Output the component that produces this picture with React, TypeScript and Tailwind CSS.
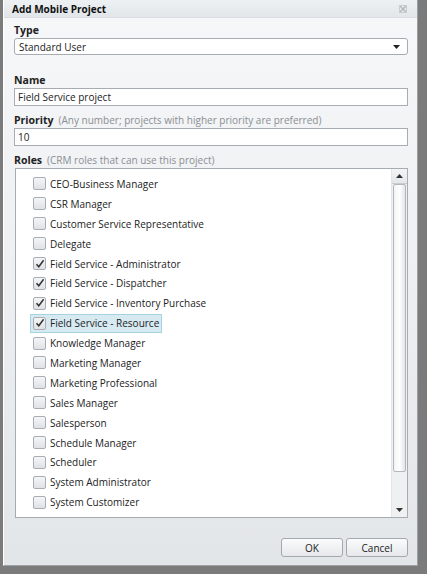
import React from "react";

const roles: [string, boolean][] = [
  ["CEO-Business Manager", false],
  ["CSR Manager", false],
  ["Customer Service Representative", false],
  ["Delegate", false],
  ["Field Service - Administrator", true],
  ["Field Service - Dispatcher", true],
  ["Field Service - Inventory Purchase", true],
  ["Field Service - Resource", true],
  ["Knowledge Manager", false],
  ["Marketing Manager", false],
  ["Marketing Professional", false],
  ["Sales Manager", false],
  ["Salesperson", false],
  ["Schedule Manager", false],
  ["Scheduler", false],
  ["System Administrator", false],
  ["System Customizer", false],
];

function Check({ on }: { on: boolean }) {
  return (
    <div className="w-[13px] h-[13px] border border-[#a9adb3] rounded-[2px] bg-gradient-to-b from-[#f4f5f6] to-[#dfe2e5] flex items-center justify-center">
      {on && (
        <svg width="10" height="10" viewBox="0 0 10 10">
          <path d="M1.5 5.2 L3.8 7.8 L8.6 1.2" fill="none" stroke="#333" strokeWidth="1.5" />
        </svg>
      )}
    </div>
  );
}

export default function App() {
  const font = { fontFamily: "'Open Sans', 'Liberation Sans', sans-serif" };
  return (
    <div className="w-[427px] h-[574px] bg-[#7b7b7b] pl-[3px] pr-[9px] pb-[8px] text-[#222]" style={font}>
      <div className="w-full h-full flex flex-col border-l border-[#fff] border-r border-b border-r-[#9aa0a6] border-b-[#9aa0a6]">
        <div className="h-[18px] flex items-center justify-between pl-[8px] pr-[10px] bg-gradient-to-b from-[#eef1f3] to-[#e2e6e9] border-b border-[#d9dde1]">
          <span className="text-[10px] font-bold text-[#111] leading-none">Add Mobile Project</span>
          <svg width="8" height="8" viewBox="0 0 8 8">
            <path d="M0.5 0.5 L7.5 7.5 M7.5 0.5 L0.5 7.5" stroke="#b5b9bd" strokeWidth="1.5" />
            <rect x="0.5" y="0.5" width="7" height="7" fill="none" stroke="#c9ccd0" strokeWidth="1" />
          </svg>
        </div>
        <div className="flex-1 flex flex-col bg-gradient-to-b from-[#f6f7f8] to-[#e3e6e9] pl-[10px] pr-[9px]">
          <div className="mt-[6px] text-[10.5px] font-bold leading-[13px]">Type</div>
          <div className="mt-[1px] h-[17px] border border-[#a7acb2] rounded-[3px] bg-white flex items-center justify-between pl-[4px] pr-[7px]">
            <span className="text-[10px] leading-none">Standard User</span>
            <svg width="7" height="4" viewBox="0 0 7 4"><path d="M0 0 H7 L3.5 4 Z" fill="#222" /></svg>
          </div>
          <div className="mt-[19px] text-[10.5px] font-bold leading-[13px]">Name</div>
          <div className="mt-[1px] h-[18px] border border-[#a7acb2] bg-white flex items-center pl-[3px]">
            <span className="text-[10px] leading-none">Field Service project</span>
          </div>
          <div className="mt-[8px] text-[10px] leading-[13px]">
            <span className="font-bold text-[10.5px]">Priority</span>
            <span className="text-[#8a8f94] ml-[5px]">(Any number; projects with higher priority are preferred)</span>
          </div>
          <div className="mt-[1px] h-[18px] border border-[#a7acb2] bg-white flex items-center pl-[3px]">
            <span className="text-[10px] leading-none">10</span>
          </div>
          <div className="mt-[8px] text-[10px] leading-[13px]">
            <span className="font-bold text-[10.5px]">Roles</span>
            <span className="text-[#8a8f94] ml-[5px]">(CRM roles that can use this project)</span>
          </div>
          <div className="mt-[1px] ml-[1px] h-[350px] border border-[#a7acb2] bg-white flex">
            <div className="flex-1 flex flex-col pt-[5px] pl-[17px]">
              {roles.map(([r, on]) => (
                <div key={r} className="h-[19.9px] flex items-center">
                  <div
                    className={
                      r === "Field Service - Resource"
                        ? "h-[19px] flex items-center gap-[4px] pl-[2px] pr-[2px] bg-[#d7eaf2] border border-[#a6d2e2] -ml-[3px]"
                        : "flex items-center gap-[4px]"
                    }
                  >
                    <Check on={on} />
                    <span className="text-[10px] leading-none">{r}</span>
                  </div>
                </div>
              ))}
            </div>
            <div className="w-[16px] flex flex-col bg-[#eef0f2] border-l border-[#e3e5e8]">
              <div className="h-[15px] flex items-center justify-center bg-gradient-to-b from-[#f3f4f5] to-[#e4e7ea] border-b border-[#c8ccd0]">
                <svg width="7" height="4" viewBox="0 0 7 4"><path d="M3.5 0 L7 4 H0 Z" fill="#333" /></svg>
              </div>
              <div className="h-[288px] mx-[1px] border border-[#b3b8be] rounded-[2px] bg-gradient-to-r from-[#f2f3f5] via-[#ffffff] to-[#e1e4e8]" />
              <div className="flex-1" />
              <div className="h-[15px] flex items-center justify-center">
                <svg width="7" height="4" viewBox="0 0 7 4"><path d="M0 0 H7 L3.5 4 Z" fill="#333" /></svg>
              </div>
            </div>
          </div>
          <div className="mt-[20px] flex justify-end gap-[3px]">
            <button className="w-[62px] h-[19px] border border-[#a3a8ae] rounded-[3px] bg-gradient-to-b from-[#fafbfb] to-[#e6e8eb] text-[10px] leading-none">OK</button>
            <button className="w-[62px] h-[19px] border border-[#a3a8ae] rounded-[3px] bg-gradient-to-b from-[#fafbfb] to-[#e6e8eb] text-[10px] leading-none">Cancel</button>
          </div>
        </div>
      </div>
    </div>
  );
}
